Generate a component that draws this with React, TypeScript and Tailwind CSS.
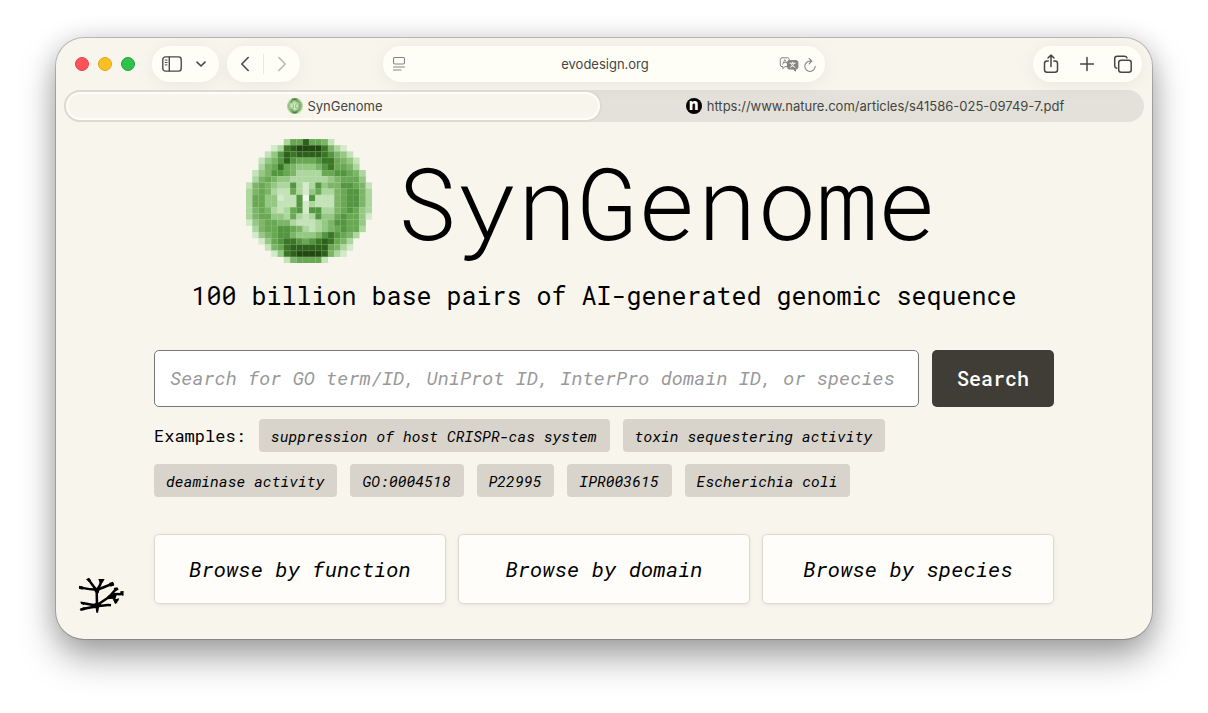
import React from "react";

const SHADES: Record<string, string> = {
  w: "#eef7ec",
  a: "#d3ebcd",
  b: "#c4e3b9",
  c: "#add79f",
  d: "#95c882",
  e: "#7cb568",
  f: "#69a853",
  g: "#549541",
  h: "#3a7626",
  i: "#2c611b",
  j: "#20480f",
};

const CUCUMBER = [
  "      cffiffeb      ",
  "    achijjjjheca    ",
  "   bdgihiiiihgedb   ",
  "  bdegigfffghhfedb  ",
  "  cefhfedddeghffec  ",
  " bdeggfeccccffggfec ",
  " cefeddccccccdefffd ",
  "befedccgcacgdeeggfeb",
  "cefecbbfcadfccefggec",
  "cffddabbgwgbbbefggec",
  "cffddbbbgacbbbefggec",
  "cefecbcfgaggccefgfdc",
  "ceffddcfcbcgddfgffda",
  "adeffeecbbbcdeggffd ",
  " ceffggfecbcdefgffc ",
  " adefggedddeghgfec  ",
  "  adfghhgfghihfec   ",
  "   befhiiiiiifeca   ",
  "    adhijjjjieca    ",
  "      beffffb       ",
];

function Cucumber({ className }: { className: string }) {
  return (
    <svg viewBox="0 0 20 20" preserveAspectRatio="none" className={className} aria-hidden="true">
      {CUCUMBER.flatMap((row, y) =>
        row.split("").map((c, x) =>
          c === " " ? null : (
            <g key={`${x}-${y}`}>
              <rect x={x} y={y} width={1.02} height={1.02} fill={SHADES[c]} />
              <path d={`M${x} ${y + 0.94}V${y + 0.06}H${x + 0.94}`} fill="none" stroke="#b9dcae" strokeOpacity={0.16} strokeWidth={0.12} />
            </g>
          )
        )
      )}
    </svg>
  );
}

function Coral() {
  return (
    <svg viewBox="27 38 135 106" className="h-9 w-[45px]" fill="none" stroke="#000" strokeLinejoin="round" aria-hidden="true">
      <g strokeWidth="7.5">
        <path d="M80 76 81 124" />
        <path d="M79 75 C69 64 63 53 55 45" />
        <path d="M80 74 C61 76 46 71 29 68" />
        <path d="M80 75 C90 67 92 60 94 46" />
        <path d="M81 75 C98 71 113 60 131 59" />
        <path d="M81 121 C62 122 49 116 33 114" />
        <path d="M81 126 C62 125 49 132 31 135" />
        <path d="M81 123 C98 125 106 119 123 122" />
        <path d="M84 119 C100 108 116 98 131 88" />
        <path d="M112 101 C123 92 129 84 138 73" />
        <path d="M129 90 C142 86 149 91 159 86" />
        <path d="M120 98 C133 98 138 107 138 116" />
      </g>
      <g fill="#000" stroke="none">
        <path d="M70 70h20l-4 15-4 3-7-6zM72 118l10-6 12 8-7 9-3 15h-5l-2-13-8-5z" />
        <path d="M48 44l9-5 7 9-6 5zM85 43h19l-7 12-8-1zM117 55l12-4 4 11-11 4zM27 63l12 3-1 9-11-3z" />
        <path d="M29 111l14 2-2 9zM28 135l15-9 2 9zM131 70l11-2 4 7-10 5zM151 80l10-1-1 16-9-6zM129 105l19-4-3 7-9 10zM113 104l14-18 14 1-4 14z" />
      </g>
    </svg>
  );
}

const line = {
  fill: "none",
  stroke: "currentColor",
  strokeLinecap: "round" as const,
  strokeLinejoin: "round" as const,
};

const SidebarIcon = () => (
  <svg viewBox="0 0 20 16" className="h-4 w-5" strokeWidth="1.4" {...line}>
    <rect x="0.8" y="0.9" width="18.4" height="14.2" rx="2.6" />
    <path d="M7.3 1v14" />
    <path d="M3.2 4.1h1.9M3.2 6.5h1.9M3.2 8.9h1.9" strokeWidth="1" />
  </svg>
);

const TranslateIcon = () => (
  <svg viewBox="0 0 20 16" className="h-4 w-5" {...line} strokeWidth="1">
    <path d="M8 10.6H6L3.8 12.6V10.6H3Q1.3 10.6 1.3 9V3.4Q1.3 1.8 3 1.8H8.5Q10.2 1.8 10.2 3.4V4.4" />
    <path d="M3.7 8.2 5.8 3.6 7.7 7M4.5 6.6h2.5" strokeWidth=".9" />
    <path d="M10.2 4.6h7q1.7 0 1.7 1.7v5q0 1.7-1.7 1.7h-.7v2.2L14.2 13h-4q-1.7 0-1.7-1.7v-5q0-1.7 1.7-1.7Z" fill="currentColor" />
    <path d="M11 7.2h5.2M13.6 6.2v1M15.2 7.4q-.9 2.7-3.8 4M12 7.7q1 2.7 3.9 3.7" stroke="#fffef6" strokeWidth=".9" />
  </svg>
);

const EXAMPLES = [
  "suppression of host CRISPR-cas system",
  "toxin sequestering activity",
  "deaminase activity",
  "GO:0004518",
  "P22995",
  "IPR003615",
  "Escherichia coli",
];

const pill = "flex h-9 items-center rounded-full bg-[#fffef6] shadow-[0_3px_18px_rgba(0,0,0,0.06)]";

function Toolbar() {
  return (
    <header className="flex items-center px-[10px] pt-2">
      <div className="flex flex-1 items-center gap-2">
        <div className="mr-[9px] ml-[9px] flex gap-[9px]">
          <button aria-label="Close" className="size-[14px] rounded-full border border-[#e9404a] bg-[#ff5358]" />
          <button aria-label="Minimize" className="size-[14px] rounded-full border border-[#e0a81d] bg-[#fabf23]" />
          <button aria-label="Zoom" className="size-[14px] rounded-full border border-[#1fa63c] bg-[#2fc14c]" />
        </div>
        <div className={`${pill} gap-[13px] pr-3 pl-[10px] text-[#4a4a47]`}>
          <button aria-label="Show sidebar"><SidebarIcon /></button>
          <button aria-label="Tab groups">
            <svg viewBox="0 0 12 12" className="size-3" strokeWidth="1.7" {...line}><path d="M2 4.2 6 8l4-3.8" /></svg>
          </button>
        </div>
        <div className={`${pill} px-[14px] text-[#4a4a47]`}>
          <button aria-label="Back" className="pr-[14px]">
            <svg viewBox="0 0 8 16" className="h-4 w-2" strokeWidth="1.6" {...line}><path d="M7.2 1.5.8 8l6.4 6.5" /></svg>
          </button>
          <span className="h-5 w-px bg-[#eae9e1]" />
          <button aria-label="Forward" className="pl-[14px] text-[#b9b8b1]">
            <svg viewBox="0 0 8 16" className="h-4 w-2" strokeWidth="1.6" {...line}><path d="M.8 1.5 7.2 8 .8 14.5" /></svg>
          </button>
        </div>
      </div>
      <div className={`${pill} w-[41%] px-2 text-[#858580]`}>
        <button aria-label="Page menu">
          <svg viewBox="0 0 16 16" className="size-4" strokeWidth="1.1" {...line}>
            <rect x="2.5" y="1.5" width="11" height="6.5" rx="1.4" />
            <path d="M2.5 11h11M2.5 14h7.5" />
          </svg>
        </button>
        <input
          aria-label="Address"
          defaultValue="evodesign.org"
          className="min-w-0 flex-1 bg-transparent pt-[2px] pl-6 text-center text-[13px] text-[#454542] outline-none"
        />
        <button aria-label="Translate"><TranslateIcon /></button>
        <button aria-label="Reload" className="ml-1 pt-[2px]">
          <svg viewBox="0 0 14 16" className="h-4 w-[14px]" strokeWidth="1.1" {...line}>
            <path d="M7 4.1A5.2 5.2 0 1 0 12.2 9.3M7 4.1h1.4M6.1 1.3 8.8 4.1 6.1 6.9" />
          </svg>
        </button>
      </div>
      <div className="flex flex-1 justify-end">
        <div className={`${pill} gap-4 pr-[9px] pl-2 text-[#464643]`}>
          <button aria-label="Share">
            <svg viewBox="0 0 20 20" className="size-5" strokeWidth="1.5" {...line}>
              <path d="M7.3 7H6Q3.5 7 3.5 9.5v6.2q0 2.5 2.5 2.5h8q2.5 0 2.5-2.5V9.5Q16.5 7 14 7H12.8M10 12.5V1.2M7 4l3-2.9 3 2.9" />
            </svg>
          </button>
          <button aria-label="New tab">
            <svg viewBox="0 0 20 20" className="size-5" strokeWidth="1.5" {...line}><path d="M10 3.6v12.8M3.6 10h12.8" /></svg>
          </button>
          <button aria-label="Show tabs">
            <svg viewBox="0 0 20 20" className="size-5" strokeWidth="1.5" {...line}>
              <rect x="5.7" y="6.2" width="12.5" height="12" rx="2.5" />
              <path d="M3.7 14.2Q1.7 13.8 1.7 11.8V4.6Q1.7 2.2 4.1 2.2h7.4q2 0 2.5 1.7" />
            </svg>
          </button>
        </div>
      </div>
    </header>
  );
}

export default function App() {
  return (
    <div className="min-h-screen bg-white px-14 pt-[38px] pb-[74px] font-['Inter',sans-serif]">
      <div className="relative overflow-clip rounded-[28px] bg-[#f8f5ed] shadow-[0_0_0_1px_rgba(0,0,0,0.2),0_18px_36px_rgba(0,0,0,0.36),0_0_26px_rgba(0,0,0,0.12)]">
        <Toolbar />

        <nav aria-label="Tabs" className="mx-2 mt-2 flex h-8 rounded-full bg-[#e3e1d9] text-[13px] text-[#454542]">
          <button className="flex w-[calc(50%-2px)] items-center justify-center gap-1 rounded-full border-2 border-[#dddad1] bg-[#f8f5ed] pl-1 shadow-[inset_0_0_0_2px_#fffdf6]">
            <Cucumber className="size-4" />
            <span className="pt-px">SynGenome</span>
          </button>
          <button className="flex flex-1 items-center justify-center gap-[5px] pl-1">
            <span className="flex size-4 items-center justify-center rounded-full bg-black pb-[3px] font-['Noto_Sans',sans-serif] text-[15px] leading-none font-extrabold text-white">
              n
            </span>
            <span className="pt-px">https://www.nature.com/articles/s41586-025-09749-7.pdf</span>
          </button>
        </nav>

        <main className="mx-auto w-full max-w-[900px] pt-[17px] pb-[35px] font-['Roboto_Mono','Liberation_Mono',monospace] text-black">
          <div className="flex items-center justify-center gap-[25px] pr-[25px]">
            <Cucumber className="h-[124px] w-[126px]" />
            <h1 className="text-[100px] leading-[124px] font-light">SynGenome</h1>
          </div>
          <p className="mt-4 text-center text-[25px] leading-[34px]">
            100 billion base pairs of AI-generated genomic sequence
          </p>

          <form className="mt-[37px] flex gap-[13px]" onSubmit={(e) => e.preventDefault()}>
            <input
              aria-label="Search terms"
              placeholder="Search for GO term/ID, UniProt ID, InterPro domain ID, or species"
              className="h-[57px] min-w-0 flex-1 rounded-[5px] border border-[#77767a] bg-white px-[15px] pb-[3px] text-[19px] italic outline-none placeholder:text-[#999999]"
            />
            <button type="submit" className="rounded-[5px] bg-[#403c36] px-[25px] pb-[2px] text-[20px] font-medium text-white">
              Search
            </button>
          </form>

          <div className="mt-3 flex max-w-[760px] flex-wrap items-center gap-x-[13px] gap-y-3">
            <span className="text-[17px] leading-[33px]">Examples:</span>
            {EXAMPLES.map((t) => (
              <button key={t} className="h-[33px] rounded-[4px] bg-[#d8d4cc] pt-px pr-[13px] pl-3 text-[15px] italic">
                {t}
              </button>
            ))}
          </div>

          <div className="mt-[37px] grid grid-cols-3 gap-3">
            {["function", "domain", "species"].map((t) => (
              <a
                key={t}
                href={`#${t}`}
                className="flex h-[70px] items-center justify-center rounded-[5px] border border-[#dcdad5] bg-[#fefdf9] pt-px text-[21px] italic shadow-[0_1px_4px_rgba(0,0,0,0.07)]"
              >
                Browse by {t}
              </a>
            ))}
          </div>
        </main>

        <a href="#lab" aria-label="Lab home" className="absolute bottom-[26px] left-[23px]">
          <Coral />
        </a>
      </div>
    </div>
  );
}
